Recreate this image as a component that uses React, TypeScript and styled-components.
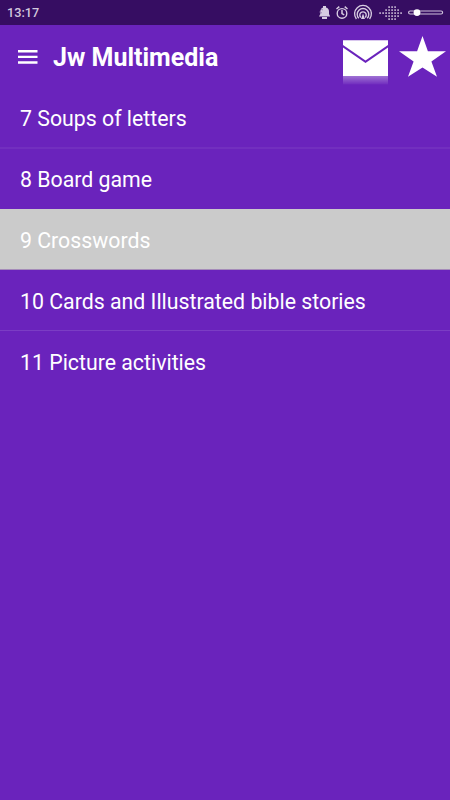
import React from 'react';
import styled, { createGlobalStyle } from 'styled-components';

const GlobalStyle = createGlobalStyle`
  * { box-sizing: border-box; }
  body { margin: 0; background: #6a23bc; font-family: Roboto, "Liberation Sans", sans-serif; }
`;

const Screen = styled.div`
  width: 450px;
  height: 800px;
  display: flex;
  flex-direction: column;
  overflow: hidden;
  background: #6a23bc;
  color: #fff;
`;

const StatusBar = styled.header`
  height: 25px;
  flex: none;
  display: flex;
  align-items: center;
  justify-content: space-between;
  padding-left: 7px;
  background: #360d62;
`;

const Clock = styled.time`
  font-size: 12.7px;
  line-height: 25px;
  font-weight: 500;
  color: #d2c8dd;
`;

const StatusIcons = styled.svg`
  display: block;
  width: 140px;
  height: 25px;
`;

const AppBar = styled.div`
  height: 63px;
  flex: none;
  display: flex;
  align-items: center;
  padding-left: 18px;
`;

const MenuButton = styled.button`
  border: 0;
  padding: 0;
  margin: 0 15px 0 0;
  width: 20px;
  height: 14px;
  background: none;
  svg { display: block; }
`;

const Title = styled.h1`
  margin: 3px 0 0;
  flex: 1;
  font-size: 25px;
  line-height: 30px;
  font-weight: 700;
  white-space: nowrap;
`;

const Actions = styled.div`
  display: flex;
  height: 63px;
  svg { display: block; }
`;

const List = styled.ul`
  margin: 0;
  padding: 0;
  list-style: none;
`;

const Row = styled.li<{ $height: number; $lineHeight: number; $divider: string; $selected: boolean }>`
  height: ${({ $height }) => $height}px;
  padding-left: 20px;
  line-height: ${({ $lineHeight }) => $lineHeight}px;
  font-size: 21.3px;
  white-space: nowrap;
  background: ${({ $selected }) => ($selected ? '#cbcbcb' : 'transparent')};
  border-bottom: ${({ $divider }) => $divider};
`;

const items = [
  { label: '7 Soups of letters', height: 61, lineHeight: 61, divider: '2px solid #722fbf' },
  { label: '8 Board game', height: 60, lineHeight: 61, divider: '0' },
  { label: '9 Crosswords', height: 61, lineHeight: 63, divider: '1px solid #a58bb9' },
  { label: '10 Cards and Illustrated bible stories', height: 61, lineHeight: 63, divider: '1px solid #7b3dc4' },
  { label: '11 Picture activities', height: 61, lineHeight: 63, divider: '0' },
];
const selected = 2;

const dots = [1, 1, 3, 5, 5, 5, 3, 1].flatMap((count, column) =>
  Array.from({ length: count }, (_, row) => [70 + column * 3, 13 + (row - (count - 1) / 2) * 3]),
);

function Status() {
  return (
    <StatusIcons viewBox="0 0 140 25" fill="none" stroke="#d8cde2">
      <g fill="#d8cde2" stroke="none">
        <path d="M9 16.5 10.3 14V11Q10.6 8.2 13 7.5V6h3v1.6q3 .8 3 4V14l1.2 2.5Z" />
        <path d="M12 17h5v2h-5Z" />
      </g>
      <path d="m9.5 12 2.5 1M11 9l2 1" stroke="#a18cb6" />
      <circle cx="32" cy="13.4" r="4.8" strokeWidth="1.4" />
      <path d="M32 10v3.6l2.2 1.2M26.5 9l2.8-2.3M37.5 9l-2.8-2.3" strokeWidth="1.5" />
      <g strokeWidth="1.35">
        <path d="M46.4 19A8.4 8.4 0 1 1 59.6 19" />
        <path d="M48.8 18.3a5.8 5.8 0 1 1 8.4 0" />
        <path d="M50.8 17.4a3.2 3.2 0 1 1 4.4 0" />
      </g>
      <path d="m53 13.5 2 5.5h-4Z" fill="#d8cde2" stroke="none" />
      {dots.map(([x, y]) => (
        <rect key={`${x}-${y}`} x={x - 0.7} y={y - 0.7} width="1.6" height="1.6" fill="#d0c3db" stroke="none" />
      ))}
      <rect x="98.6" y="11" width="34" height="3" rx="1.5" stroke="#cfc1db" strokeWidth="1.2" />
      <circle cx="107" cy="12.6" r="3.4" fill="#fff" stroke="none" />
    </StatusIcons>
  );
}

export default function App() {
  return (
    <Screen>
      <GlobalStyle />
      <StatusBar>
        <Clock>13:17</Clock>
        <Status />
      </StatusBar>
      <AppBar>
        <MenuButton aria-label="Menu">
          <svg width="20" height="14" fill="#fff">
            <path d="M0 0h19.5v2.5H0ZM0 5.7h19.5v2.4H0ZM0 11.3h19.5v2.5H0Z" />
          </svg>
        </MenuButton>
        <Title>Jw Multimedia</Title>
        <Actions>
          <svg width="110" height="63" viewBox="340 25 110 63">
            <defs>
              <linearGradient id="reflection" x1="0" y1="0" x2="0" y2="1">
                <stop offset="0" stopColor="#fff" stopOpacity=".36" />
                <stop offset="1" stopColor="#fff" stopOpacity="0.04" />
              </linearGradient>
            </defs>
            <path d="M343 40.3h45v4.7L365.5 60.5 343 45Z" fill="#fff" />
            <path d="M343 47.6 365.5 63 388 47.6V76h-45Z" fill="#fff" />
            <rect x="343" y="76" width="45" height="8.5" fill="url(#reflection)" />
            <path d="m422.5 36 5.4 15.2H446l-14.6 10.3 5.6 15.3-14.5-9.4L408 76.8l5.6-15.3L399 51.2h18.1Z" fill="#fff" />
          </svg>
        </Actions>
      </AppBar>
      <List>
        {items.map(({ label, height, lineHeight, divider }, index) => (
          <Row key={label} $height={height} $lineHeight={lineHeight} $divider={divider} $selected={index === selected}>
            {label}
          </Row>
        ))}
      </List>
    </Screen>
  );
}
